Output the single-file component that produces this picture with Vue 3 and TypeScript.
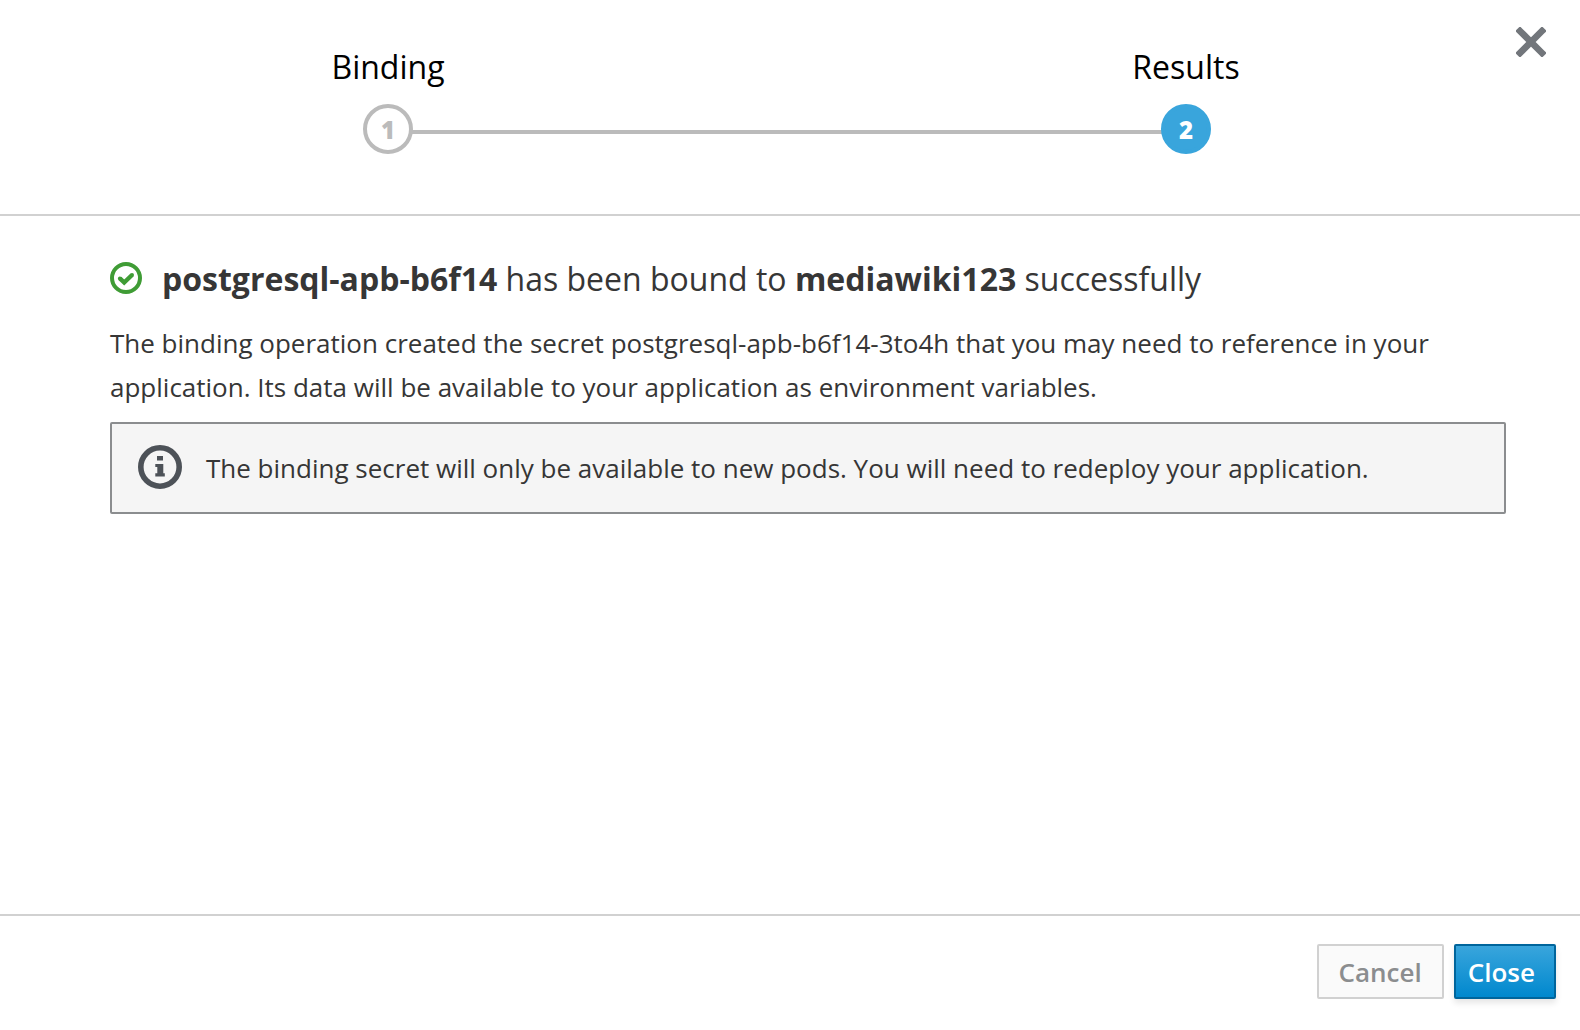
<script setup lang="ts">
interface Step {
  id: number
  label: string
  active: boolean
}

const steps: Step[] = [
  { id: 1, label: 'Binding', active: false },
  { id: 2, label: 'Results', active: true },
]

const service = 'postgresql-apb-b6f14'
const secret = 'postgresql-apb-b6f14-3to4h'
const application = 'mediawiki123'
</script>

<template>
  <div class="wizard">
    <header class="wizard-header">
      <ol class="steps">
        <li v-for="step in steps" :key="step.id" class="step" :class="{ active: step.active }">
          <span class="step-label">{{ step.label }}</span>
          <span class="step-number">{{ step.id }}</span>
        </li>
      </ol>
      <button type="button" class="dismiss" aria-label="Dismiss">
        <svg viewBox="0 0 30 30" width="30" height="30" aria-hidden="true">
          <path d="M4 4 26 26M26 4 4 26" fill="none" stroke="#72767b" stroke-width="6.6" stroke-linejoin="round" stroke-linecap="square" />
        </svg>
      </button>
    </header>

    <main class="wizard-main">
      <h1 class="title">
        <svg class="ok-icon" viewBox="0 0 32 32" width="32" height="32" aria-hidden="true">
          <circle cx="16" cy="16" r="14" fill="none" stroke="#3f9c35" stroke-width="4" />
          <path d="M9.9 16.4 14.2 20.5 22 13" fill="none" stroke="#3f9c35" stroke-width="4.4" stroke-linejoin="miter" stroke-linecap="butt" />
          <circle cx="9.9" cy="16.4" r="2" fill="#3f9c35" />
          <circle cx="22" cy="13" r="2" fill="#3f9c35" />
        </svg>
        <span><strong>{{ service }}</strong> has been bound to <strong>{{ application }}</strong> successfully</span>
      </h1>
      <p class="description">
        The binding operation created the secret {{ secret }} that you may need to reference in your
        application. Its data will be available to your application as environment variables.
      </p>
      <div class="alert" role="status">
        <svg class="info-icon" viewBox="0 0 44 44" width="44" height="44" aria-hidden="true">
          <circle cx="22" cy="22" r="19.2" fill="none" stroke="#4d5258" stroke-width="5.6" />
          <path d="M19 11h6v4.5h-6zM17.3 19H25.3v9.3h1.5v3.2H17.3v-3.2h2V22h-2z" fill="#4d5258" />
        </svg>
        <span>The binding secret will only be available to new pods. You will need to redeploy your application.</span>
      </div>
    </main>

    <footer class="wizard-footer">
      <button type="button" class="btn btn-cancel" disabled>Cancel</button>
      <button type="button" class="btn btn-primary">Close</button>
    </footer>
  </div>
</template>

<style>
body {
  margin: 0;
  background: #fff;
}
</style>

<style scoped>
.wizard {
  box-sizing: border-box;
  display: flex;
  flex-direction: column;
  min-height: 100vh;
  color: #363636;
  font-family: "Open Sans", "Noto Sans", sans-serif;
  font-size: 26px;
  line-height: 44px;
}

.wizard-header {
  position: relative;
  overflow: hidden;
  padding: 45px 0 60px;
  border-bottom: 2px solid #d1d1d1;
}

.steps {
  display: grid;
  grid-template-columns: 1fr 1fr;
  margin: 0 -5px 0 -11px;
  padding: 0;
  list-style: none;
}

.step {
  position: relative;
  display: flex;
  flex-direction: column;
  align-items: center;
  gap: 15px;
  color: #000;
  font-size: 32px;
}

.step + .step::before {
  content: "";
  position: absolute;
  right: 50%;
  bottom: 20px;
  width: calc(100% - 24px);
  height: 4px;
  background: #bbb;
}

.step-number {
  position: relative;
  box-sizing: border-box;
  width: 50px;
  height: 50px;
  border: 4px solid #bbb;
  border-radius: 50%;
  background: #fff;
  color: #bbb;
  font-size: 24px;
  font-weight: 800;
  line-height: 44px;
  text-align: center;
}

.active .step-number {
  border-color: #39a5dc;
  background: #39a5dc;
  color: #fff;
}

.dismiss {
  position: absolute;
  top: 27px;
  right: 34px;
  display: flex;
  padding: 0;
  border: 0;
  background: none;
}

.wizard-main {
  flex: 1;
  padding: 40px 74px 40px 110px;
}

.title {
  display: flex;
  align-items: flex-start;
  gap: 20px;
  margin: 0;
  font-size: 32px;
  font-weight: 400;
  line-height: 46px;
}

.title strong {
  font-weight: 700;
}

.ok-icon,
.info-icon {
  flex: none;
}

.ok-icon {
  margin-top: 6px;
}

.description {
  margin: 19px 0 13px;
}

.alert {
  display: flex;
  align-items: flex-start;
  gap: 24px;
  padding: 21px 26px;
  border: 2px solid #8b8d8f;
  border-radius: 2px;
  background: #f5f5f5;
  line-height: 46px;
}

.wizard-footer {
  display: flex;
  justify-content: flex-end;
  gap: 10px;
  padding: 28px 24px 31px;
  border-top: 2px solid #d1d1d1;
}

.btn {
  box-sizing: border-box;
  height: 55px;
  border: 2px solid #d1d1d1;
  border-radius: 2px;
  font-family: inherit;
  font-size: 26px;
  font-weight: 600;
  line-height: 44px;
}

.btn-cancel {
  padding: 2px 20px;
  background: #fafafa;
  color: #8b8d8f;
}

.btn-primary {
  padding: 2px 19px 2px 12px;
  border-color: #00659c;
  background: linear-gradient(#39a5dc, #0088ce);
  box-shadow: 0 4px 6px rgba(3, 3, 3, 0.1);
  color: #fff;
}
</style>
